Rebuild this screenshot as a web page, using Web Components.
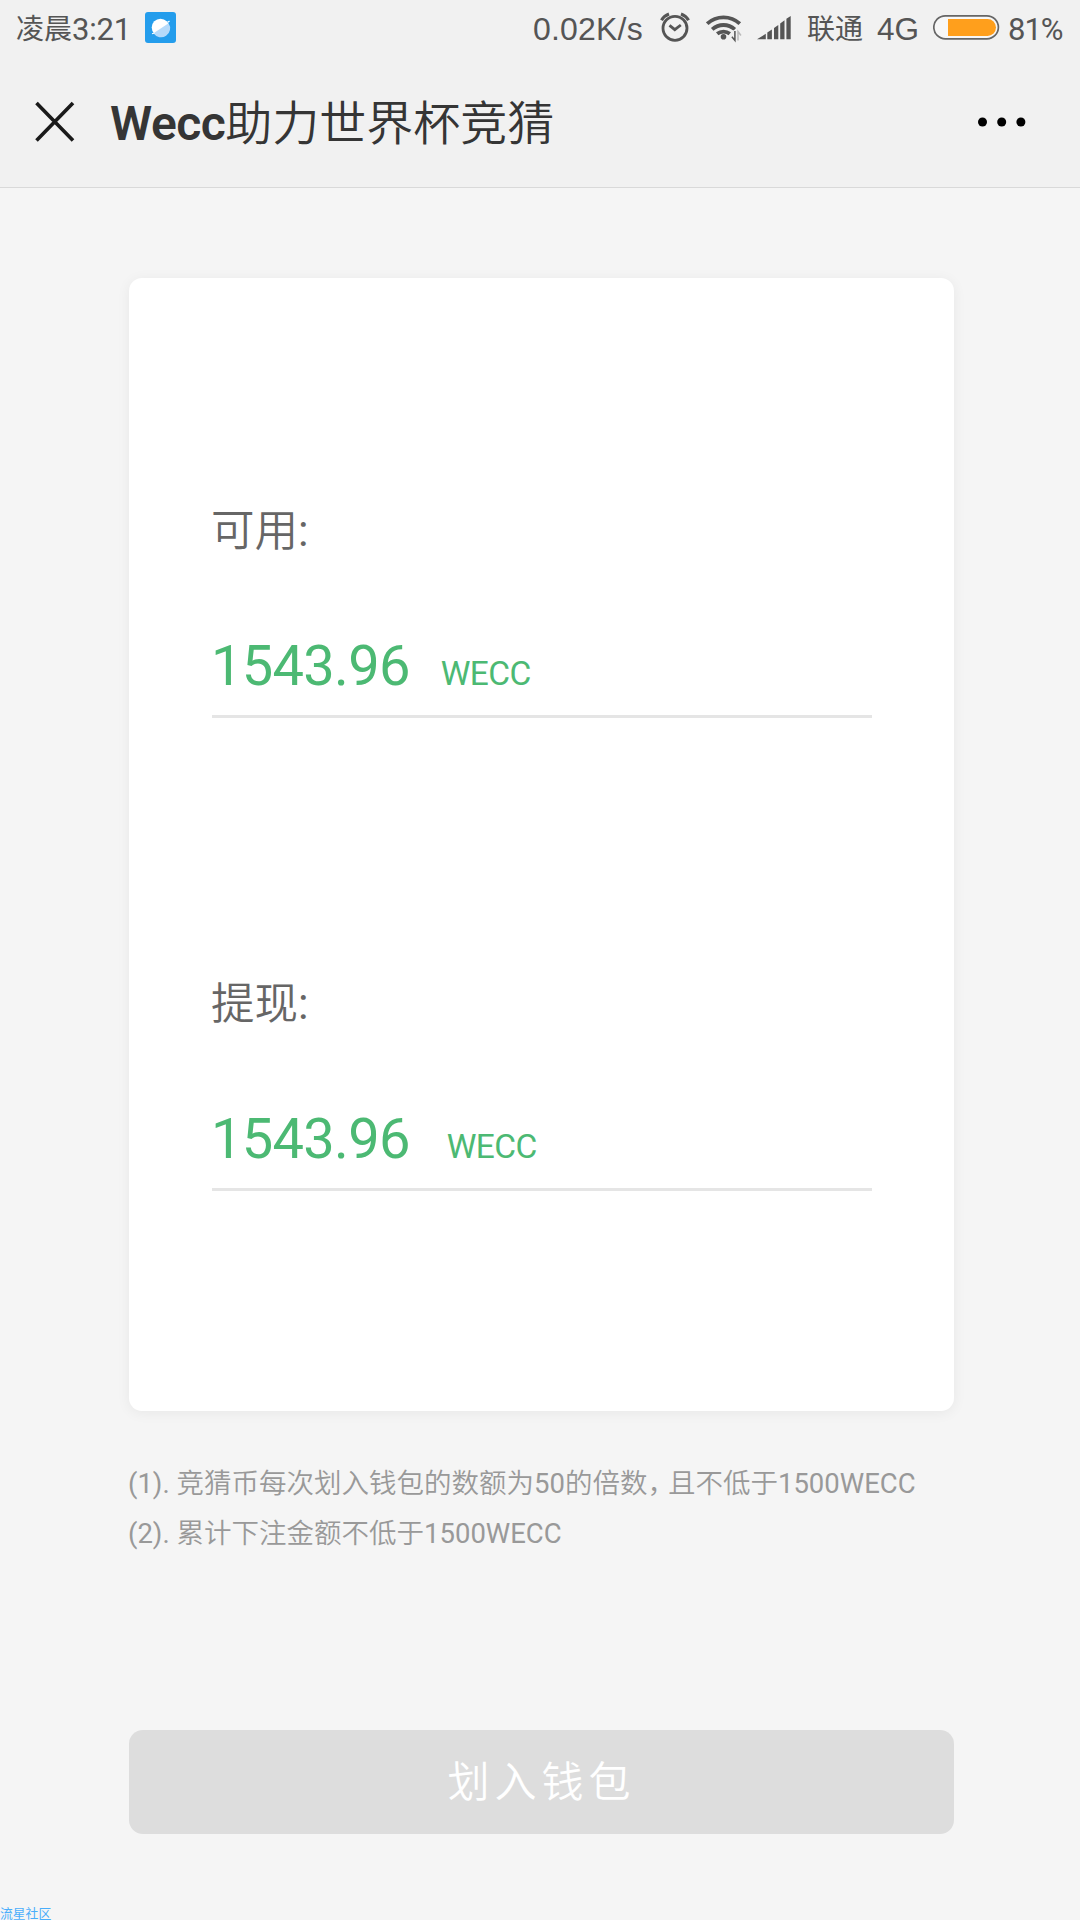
<!DOCTYPE html>
<html lang="zh-CN">
<head>
  <meta charset="utf-8">
  <title>Wecc助力世界杯竞猜</title>
  <style>
    body {
      margin: 0;
      background: #f5f5f5;
      font-family: Roboto, "Noto Sans CJK SC", sans-serif;
    }
  </style>
</head>
<body>
  <wecc-app></wecc-app>

  <script>
    class StatusBar extends HTMLElement {
      constructor() {
        super();
        this.attachShadow({ mode: 'open' });
        this.shadowRoot.innerHTML = `
          <style>
            :host {
              display: flex;
              justify-content: space-between;
              height: 56px;
              padding: 0 0 0 16px;
              box-sizing: border-box;
              color: #555;
              line-height: 58px;
              white-space: nowrap;
            }
            div { display: flex; align-items: center; height: 56px; }
            svg { display: block; flex: none; }
            span { flex: none; height: 56px; }
            .cjk { font-size: 28px; line-height: 60px; }
            .num { font-size: 31px; letter-spacing: -0.2px; line-height: 59px; }
            .arial { font-family: "Liberation Sans", sans-serif; font-size: 32px; }
            .time { width: 56px; }
          </style>
          <div>
            <span class="cjk">凌晨</span><span class="num time">3:21</span>
            <svg width="32" height="56" style="margin-left:17px">
              <rect y="12" width="31" height="31" rx="3" fill="#249dec"/>
              <circle cx="15.5" cy="27.5" r="8.8" fill="#fff"/>
              <path d="M8.5 33.3 23.6 23.2a8.8 8.8 0 0 1-15.1 10.1z" fill="#b5dafa"/>
              <path d="M7 33.8l2.5-.8M22.5 22.5l2-1.5" stroke="#fff" stroke-width="1.2"/>
            </svg>
          </div>
          <div>
            <span class="arial" style="width:127px;letter-spacing:.2px">0.02K/s</span>
            <svg width="46" height="56" fill="none" stroke="#555">
              <circle cx="15" cy="28.3" r="12" stroke-width="2.8"/>
              <path d="M9.5 25.3l5.3 4.4 6-4.7" stroke-width="2.8"/>
              <path d="M1.5 20.2Q4 15.8 9 14M28.5 20.2Q26 15.8 21 14" stroke-width="3.2"/>
            </svg>
            <svg width="51" height="56" fill="none" stroke="#555" stroke-width="3.8">
              <path d="M1.2 24.5a24 24 0 0 1 32.6 0" transform="translate(0 -.8)"/>
              <path d="M6.2 29.3a17 17 0 0 1 22.6 0M11.2 33.8a10 10 0 0 1 12.6 0"/>
              <circle cx="17.5" cy="36.8" r="2.8" fill="#555" stroke="none"/>
              <path d="M28.4 30.5V41" stroke="#f1f1f1" stroke-width="5"/>
              <path d="M28.9 31v9.5l-3-3.7" stroke-width="1.5"/>
              <path d="M32 40.5V31.5l3 4" stroke="#bbb" stroke-width="1.5"/>
            </svg>
            <svg width="50" height="56" fill="#555">
              <path d="M0 39.3 8.8 33.8v5.5zM10.3 32.5l4.6-3v9.8h-4.6zM17 28l4.3-3v14.3H17zM23.2 23.5l4.3-3.3v19.1h-4.3zM29.4 18.7l4.3-2.8v23.4h-4.3z"/>
            </svg>
            <span class="cjk" style="width:70px">联通</span>
            <span class="arial" style="width:56px;font-size:31.5px">4G</span>
            <svg width="75" height="56">
              <rect x=".8" y="15.8" width="64.6" height="23" rx="11.5" fill="#f7f7f7" stroke="#666" stroke-width="1.7"/>
              <path d="M15 19h39.5a8.5 8.5 0 0 1 0 17H15z" fill="#ff9f1c"/>
            </svg>
            <span class="num" style="width:72px;letter-spacing:-1px">81%</span>
          </div>
        `;
      }
    }

    class NavBar extends HTMLElement {
      constructor() {
        super();
        this.attachShadow({ mode: 'open' });
        this.shadowRoot.innerHTML = `
          <style>
            :host {
              display: flex;
              align-items: center;
              height: 132px;
              padding: 0 54px 0 35px;
              box-sizing: border-box;
              border-bottom: 1px solid #d9d9d9;
            }
            h1 {
              flex: 1;
              margin: 0 0 0 35px;
              font-size: 47px;
              font-weight: 350;
              line-height: 131px;
              padding-top: 4px;
              color: #353535;
            }
            b {
              font-size: 48px;
              font-weight: 600;
              letter-spacing: -0.5px;
            }
          </style>
          <svg width="40" height="42" viewBox="0 0 40 42" stroke="#1a1a1a" stroke-width="3.6">
            <path d="M1.5 2 38 39.5M38 2 1.5 39.5"/>
          </svg>
          <h1><b><slot name="latin"></slot></b><slot></slot></h1>
          <svg width="48" height="10">
            <circle cx="4.5" cy="5" r="4.5"/>
            <circle cx="23.7" cy="5" r="4.5"/>
            <circle cx="42.9" cy="5" r="4.5"/>
          </svg>
        `;
      }
    }

    class BalanceField extends HTMLElement {
      constructor() {
        super();
        this.attachShadow({ mode: 'open' });
        this.shadowRoot.innerHTML = `
          <style>
            :host {
              display: block;
              height: 207px;
              border-bottom: 3px solid #e5e5e5;
            }
            .label {
              height: 54px;
              line-height: 48px;
              font-size: 43.5px;
              font-weight: 350;
              color: #666;
              margin-left: -1px;
            }
            .colon { font-weight: 400; }
            .amount {
              display: flex;
              align-items: baseline;
              gap: var(--unit-gap, 31px);
              margin: 74px 0 0 -1px;
              color: #4cb973;
              font-size: 56px;
              line-height: 60px;
              letter-spacing: -0.7px;
            }
            .unit { font-size: 33.5px; letter-spacing: -0.6px; }
          </style>
          <div class="label"><slot name="label"></slot><span class="colon">:</span></div>
          <div class="amount"><slot></slot><span class="unit">WECC</span></div>
        `;
      }
    }

    class BalanceCard extends HTMLElement {
      constructor() {
        super();
        this.attachShadow({ mode: 'open' });
        this.shadowRoot.innerHTML = `
          <style>
            :host {
              display: flex;
              flex-direction: column;
              gap: 263px;
              height: 1133px;
              padding: 230px 82px 0 83px;
              box-sizing: border-box;
              background: #fff;
              border-radius: 13px;
              box-shadow: 0 2px 14px rgba(0, 0, 0, 0.06);
            }
          </style>
          <slot></slot>
        `;
      }
    }

    class RuleNotes extends HTMLElement {
      constructor() {
        super();
        this.attachShadow({ mode: 'open' });
        this.shadowRoot.innerHTML = `
          <style>
            :host {
              display: block;
              margin: 48px 0 0 -1px;
              font-size: 27.5px;
              font-weight: 350;
              line-height: 50px;
              color: #999;
              white-space: nowrap;
            }
            /* Roboto has no demilight cut, keep latin at regular */
            b { font-weight: 400; }
            .comma { letter-spacing: -7px; }
          </style>
          <div><b>(1). </b>竞猜币每次划入钱包的数额为<b>50</b>的倍数<span class="comma">，</span>且不低于<b>1500WECC</b></div>
          <div><b>(2). </b>累计下注金额不低于<b>1500WECC</b></div>
        `;
      }
    }

    class SubmitButton extends HTMLElement {
      constructor() {
        super();
        this.attachShadow({ mode: 'open' });
        this.shadowRoot.innerHTML = `
          <style>
            :host { display: block; margin-top: 171px; }
            button {
              display: block;
              width: 100%;
              height: 104px;
              padding: 0 0 8px;
              border: 0;
              border-radius: 14px;
              background: #ddd;
              color: #fff;
              font: inherit;
              font-size: 42px;
              font-weight: 350;
              letter-spacing: 5px;
            }
          </style>
          <button type="button"><slot></slot></button>
        `;
      }
    }

    class WeccApp extends HTMLElement {
      constructor() {
        super();
        this.attachShadow({ mode: 'open' });
        this.shadowRoot.innerHTML = `
          <style>
            :host {
              display: flex;
              flex-direction: column;
              width: 1080px;
              height: 1920px;
              overflow: hidden;
            }
            header { background: #f1f1f1; }
            main { flex: 1; padding: 90px 126px 0 129px; }
            footer {
              height: 14px;
              line-height: 15px;
              font-size: 12.8px;
              color: #4aaefb;
            }
          </style>
          <header>
            <status-bar></status-bar>
            <nav-bar><span slot="latin">Wecc</span>助力世界杯竞猜</nav-bar>
          </header>
          <main>
            <balance-card>
              <balance-field><span slot="label">可用</span><span>1543.96</span></balance-field>
              <balance-field style="--unit-gap: 37px"><span slot="label">提现</span><span>1543.96</span></balance-field>
            </balance-card>
            <rule-notes></rule-notes>
            <submit-button>划入钱包</submit-button>
          </main>
          <footer>流星社区</footer>
        `;
      }
    }

    customElements.define('status-bar', StatusBar);
    customElements.define('nav-bar', NavBar);
    customElements.define('balance-field', BalanceField);
    customElements.define('balance-card', BalanceCard);
    customElements.define('rule-notes', RuleNotes);
    customElements.define('submit-button', SubmitButton);
    customElements.define('wecc-app', WeccApp);
  </script>
</body>
</html>
